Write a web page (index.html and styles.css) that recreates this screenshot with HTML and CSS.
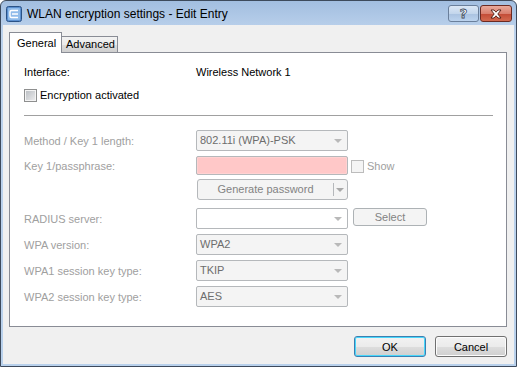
FILE: index.html
```html
<!DOCTYPE html>
<html lang="en">
  <head>
    <meta charset="UTF-8" />
    <title>WLAN encryption settings - Edit Entry</title>
    <link rel="stylesheet" href="styles.css">
  </head>

  <body>
    <div class="window">
      <div class="titlebar">
        <svg class="app-icon" width="16" height="16" viewBox="0 0 16 16">
          <rect x="0.5" y="0.5" width="15" height="15" rx="2" fill="#5b8fcf" stroke="#2a5286" />
          <rect x="2" y="2" width="12" height="12" rx="1" fill="#8fbbea" />
          <path d="M12 4.5H5.5Q4 4.5 4 6v4q0 1.5 1.5 1.5H12M6 8h6" fill="none" stroke="#fff" stroke-width="1.4" />
        </svg>
        <span class="title">WLAN encryption settings - Edit Entry</span>
        <div class="caption-btns">
          <button class="cap-btn help">?</button>
          <button class="cap-btn close">
            <svg width="14" height="10" viewBox="0 0 14 10">
              <path d="M2 1h3l2 2.2L9 1h3L8.8 5 12 9H9L7 6.8 5 9H2l3.2-4z" fill="#fff" stroke="#4a1810" stroke-width="0.9" stroke-linejoin="round" />
            </svg>
          </button>
        </div>
      </div>

      <div class="client">
        <div class="tabs">
          <div class="tab active">General</div>
          <div class="tab">Advanced</div>
        </div>

        <div class="panel">
          <div class="row info">
            <span class="label">Interface:</span>
            <span>Wireless Network 1</span>
          </div>

          <div class="row check-row">
            <span class="checkbox"></span>
            <span>Encryption activated</span>
          </div>

          <div class="separator"></div>

          <div class="row field method">
            <span class="label">Method / Key 1 length:</span>
            <div class="combo">802.11i (WPA)-PSK</div>
          </div>

          <div class="row field key">
            <span class="label">Key 1/passphrase:</span>
            <div class="passphrase"></div>
            <span class="checkbox disabled"></span>
            <span class="show">Show</span>
          </div>

          <div class="row field generate">
            <span class="label"></span>
            <div class="split-btn">
              <span class="split-main">Generate password</span>
              <span class="split-arrow"></span>
            </div>
          </div>

          <div class="row field radius">
            <span class="label">RADIUS server:</span>
            <div class="combo editable"></div>
            <button class="btn-disabled">Select</button>
          </div>

          <div class="row field">
            <span class="label">WPA version:</span>
            <div class="combo">WPA2</div>
          </div>

          <div class="row field">
            <span class="label">WPA1 session key type:</span>
            <div class="combo">TKIP</div>
          </div>

          <div class="row field">
            <span class="label">WPA2 session key type:</span>
            <div class="combo">AES</div>
          </div>
        </div>

        <div class="footer">
          <button class="btn default">OK</button>
          <button class="btn">Cancel</button>
        </div>
      </div>
    </div>
  </body>
</html>
```

FILE: styles.css
```css
* {
  box-sizing: border-box;
  margin: 0;
  padding: 0;
}

body {
  font-family: 'Liberation Sans', Arial, sans-serif;
  font-size: 11px;
  color: #000;
  background: #fff;
}

.window {
  width: 517px;
  height: 367px;
  border: 1px solid #3d4a5c;
  border-radius: 6px 6px 0 0;
  background: linear-gradient(#a2bee0, #bcd2ec 30px, #b9d1ec);
  display: flex;
  flex-direction: column;
}

.titlebar {
  height: 24px;
  display: flex;
  align-items: center;
  padding-left: 5px;
  padding-right: 4px;
  flex-shrink: 0;
}

.app-icon {
  margin-top: 1px;
}

.title {
  margin-left: 5px;
  font-size: 12px;
  margin-top: 1px;
}

.caption-btns {
  margin-left: auto;
  display: flex;
  gap: 1px;
  align-self: flex-start;
  margin-top: 4px;
}

.cap-btn {
  height: 17px;
  border: 1px solid #6a7f9b;
  border-radius: 3px;
  display: flex;
  align-items: center;
  justify-content: center;
  font-family: 'DejaVu Sans', sans-serif;
  font-weight: bold;
  font-size: 13px;
}

.cap-btn.help {
  width: 31px;
  background: linear-gradient(#dbe7f5, #c3d6ec 50%, #a9c2e0 51%, #bcd3ee);
  color: #fff;
  -webkit-text-stroke: 0.8px #3c4a5c;
}

.cap-btn.close {
  width: 32px;
  border-color: #6b2a22;
  background: linear-gradient(#e9a99b, #d9806f 50%, #c24a35 51%, #d36a50);
}

.client {
  flex: 1;
  margin: 0 2px 2px 2px;
  background: #f0f0f0;
  padding: 7px 7px 0 6px;
}

.tabs {
  display: flex;
  align-items: flex-start;
  height: 20px;
}

.tab {
  border: 1px solid #898c95;
  border-bottom: none;
  height: 16px;
  margin-top: 4px;
  padding-left: 4px;
  width: 57px;
  margin-left: -1px;
  background: linear-gradient(#f2f2f2, #ebebeb 50%, #dddddd 51%, #cfcfcf);
  line-height: 15px;
}

.tab.active {
  background: #fff;
  height: 21px;
  margin-top: 0;
  margin-left: 0;
  width: 53px;
  padding-left: 7px;
  line-height: 21px;
  position: relative;
  z-index: 1;
}

.panel {
  height: 275px;
  background: #fff;
  border: 1px solid #898c95;
  padding: 0 13px 0 14px;
}

.row {
  display: flex;
  align-items: center;
}

.label {
  width: 172px;
  flex-shrink: 0;
}

.info {
  height: 16px;
  margin-top: 11px;
}

.check-row {
  height: 16px;
  margin-top: 7px;
}

.checkbox {
  width: 13px;
  height: 13px;
  border: 1px solid #8e8f8f;
  background: linear-gradient(135deg, #b8bcc1, #eeeeef);
  box-shadow: inset 0 0 0 1px #f4f4f4;
  margin-right: 3px;
}

.separator {
  margin-top: 12px;
  border-top: 1px solid #a0a0a0;
}

.field {
  height: 21px;
  margin-top: 5px;
  color: #a0a0a0;
}

.method {
  margin-top: 14px;
}

.key {
  height: 19px;
}

.generate {
  margin-top: 4px;
}

.radius {
  margin-top: 8px;
}

.combo {
  width: 152px;
  height: 21px;
  border: 1px solid #b5b8bb;
  border-radius: 2px;
  background: #f4f4f4;
  color: #6d6d6d;
  padding-left: 3px;
  line-height: 19px;
  position: relative;
}

.combo.editable {
  background: #fff;
}

.combo::after {
  content: '';
  position: absolute;
  right: 5px;
  top: 8px;
  border-left: 4px solid transparent;
  border-right: 4px solid transparent;
  border-top: 4px solid #b9b9b9;
}

.passphrase {
  width: 152px;
  height: 19px;
  border: 1px solid #b5b8bb;
  border-radius: 2px;
  background: #ffc8c8;
  box-shadow: inset 0 0 0 1px #ffd2d2;
}

.checkbox.disabled {
  border-color: #bcbcbc;
  background: #f4f4f4;
  box-shadow: none;
  margin-left: 3px;
  margin-right: 0;
  margin-top: 2px;
}

.show {
  margin-left: 3px;
  color: #a0a0a0;
}

.split-btn {
  width: 151px;
  height: 21px;
  margin-left: 1px;
  border: 1px solid #b5b8bb;
  border-radius: 3px;
  background: #f4f4f4;
  color: #838383;
  display: flex;
}

.split-main {
  flex: 1;
  text-align: center;
  border-right: 1px solid #b5b8bb;
  margin: 3px 0;
  line-height: 13px;
}

.split-arrow {
  width: 13px;
  position: relative;
}

.split-arrow::after {
  content: '';
  position: absolute;
  left: 2px;
  top: 8px;
  border-left: 4px solid transparent;
  border-right: 4px solid transparent;
  border-top: 4px solid #a8a8a8;
}

.btn-disabled {
  width: 74px;
  height: 18px;
  margin-left: 5px;
  align-self: flex-start;
  border: 1px solid #adb2b5;
  border-radius: 3px;
  background: #f4f4f4;
  color: #838383;
  font-family: inherit;
  font-size: 11px;
}

.footer {
  display: flex;
  justify-content: flex-end;
  gap: 9px;
  padding-top: 9px;
}

.btn {
  width: 72px;
  height: 21px;
  border: 1px solid #707070;
  border-radius: 3px;
  background: linear-gradient(#f2f2f2, #ebebeb 50%, #dddddd 51%, #cfcfcf);
  box-shadow: inset 0 0 0 1px #fcfcfc;
  font-family: inherit;
  font-size: 11px;
  color: #000;
}

.btn.default {
  border-color: #3c7fb1;
  box-shadow: inset 0 0 0 1px #48d7fb;
}
```
